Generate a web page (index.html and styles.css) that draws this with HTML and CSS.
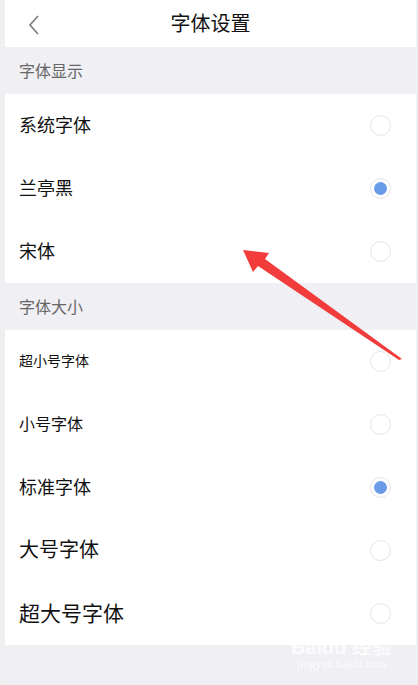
FILE: index.html
```html
<!DOCTYPE html>
<html lang="zh-CN">
<head>
    <meta charset="UTF-8">
    <meta name="viewport" content="width=device-width, initial-scale=1.0">
    <title>字体设置</title>
    <link rel="stylesheet" href="styles.css">
</head>
<body>

    <div class="screen">
        <!-- Top bar with back button -->
        <header class="top-bar">
            <svg class="back" width="12" height="20" viewBox="0 0 12 20">
                <polyline points="10,1 2,10 10,19" fill="none" stroke="#7a7a7a" stroke-width="1.6"/>
            </svg>
            <h1>字体设置</h1>
        </header>

        <!-- Font family -->
        <div class="section-title">字体显示</div>
        <ul class="options">
            <li class="size-18"><span>系统字体</span><i class="radio"></i></li>
            <li class="size-18"><span>兰亭黑</span><i class="radio checked"></i></li>
            <li class="size-18"><span>宋体</span><i class="radio"></i></li>
        </ul>

        <!-- Font size -->
        <div class="section-title">字体大小</div>
        <ul class="options">
            <li class="size-14"><span>超小号字体</span><i class="radio"></i></li>
            <li class="size-16"><span>小号字体</span><i class="radio"></i></li>
            <li class="size-18"><span>标准字体</span><i class="radio checked"></i></li>
            <li class="size-20"><span>大号字体</span><i class="radio"></i></li>
            <li class="size-22"><span>超大号字体</span><i class="radio"></i></li>
        </ul>

        <div class="watermark">
            <span class="wm-logo">Bai<b>du</b> 经验</span>
            <span class="wm-url">jingyan.baidu.com</span>
        </div>
    </div>

    <!-- Pointer arrow drawn over the list -->
    <svg class="pointer" width="418" height="685" viewBox="0 0 418 685">
        <polygon points="243,250 269,253 265,259 402,359 399,360 258,266 253,272" fill="#f23b3b"/>
    </svg>

</body>
</html>
```

FILE: styles.css
```css
* {
    margin: 0;
    padding: 0;
    box-sizing: border-box;
}

body {
    background: #efeff1;
    font-family: "Noto Sans CJK SC", "Noto Sans", sans-serif;
    color: #111;
    width: 418px;
    height: 685px;
    overflow: hidden;
    position: relative;
}

.screen {
    margin: 0 2px 0 5px;
    height: 685px;
    background: #f0f0f4;
    position: relative;
}

/* Header */
.top-bar {
    height: 47px;
    background: #fff;
    display: flex;
    align-items: center;
    justify-content: center;
    position: relative;
}

.top-bar h1 {
    font-size: 20px;
    font-weight: normal;
    line-height: 1;
    margin-top: -1px;
}

.back {
    position: absolute;
    left: 23px;
    top: 15px;
}

/* Group headings */
.section-title {
    height: 47px;
    display: flex;
    align-items: center;
    padding: 0 0 2px 14px;
    font-size: 16px;
    color: #666;
}

/* Option rows */
.options {
    list-style: none;
    background: #fff;
}

.options li {
    height: 63px;
    display: flex;
    align-items: center;
    justify-content: space-between;
    padding: 0 25px 0 14px;
}

.options li span {
    margin-top: -4px;
}

.size-14 { font-size: 14px; }
.size-16 { font-size: 16px; }
.size-18 { font-size: 18px; }
.size-20 { font-size: 20px; }
.size-22 { font-size: 21px; }

.radio {
    width: 21px;
    height: 21px;
    border: 1px solid #e3e3e6;
    border-radius: 50%;
    display: flex;
    align-items: center;
    justify-content: center;
}

.radio.checked::after {
    content: "";
    width: 13px;
    height: 13px;
    border-radius: 50%;
    background: #6a9be8;
}

/* Faint site mark at the bottom */
.watermark {
    position: absolute;
    right: 24px;
    bottom: 14px;
    display: flex;
    flex-direction: column;
    align-items: center;
    color: rgba(255, 255, 255, 0.8);
    font-family: "Liberation Serif", serif;
    line-height: 1.1;
}

.wm-logo {
    font-size: 20px;
    font-weight: bold;
    font-family: "Liberation Sans", "Noto Sans CJK SC", sans-serif;
}

.wm-url {
    font-size: 12px;
}

.pointer {
    position: absolute;
    left: 0;
    top: 0;
    pointer-events: none;
}
```
